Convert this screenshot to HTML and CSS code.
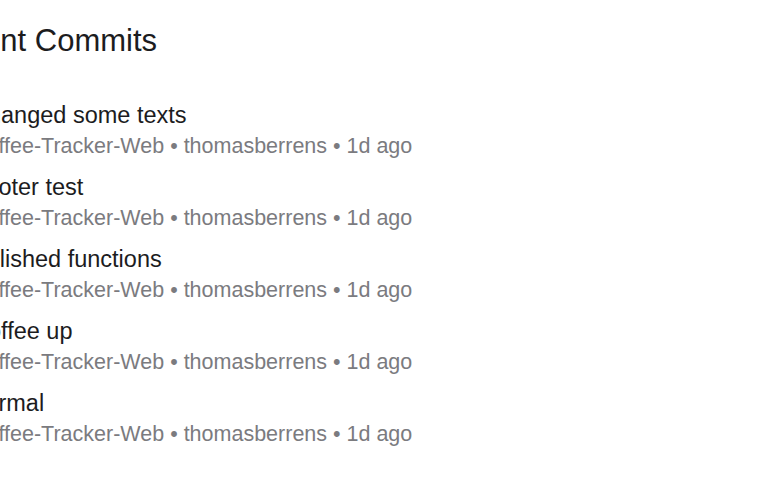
FILE: index.html
```html
<!DOCTYPE html>
<html lang="en">
<head>
<meta charset="UTF-8">
<meta name="viewport" content="width=device-width, initial-scale=1.0">
<link rel="stylesheet" href="styles.css">
</head>
<body>
<div class="container">
	<h2 class="header">Recent Commits</h2>
	<ul class="commit-list">
		<li class="commit">
			<span class="commit-title">Changed some texts</span>
			<span class="commit-meta">Coffee-Tracker-Web • thomasberrens • 1d ago</span>
		</li>
		<li class="commit">
			<span class="commit-title">Footer test</span>
			<span class="commit-meta">Coffee-Tracker-Web • thomasberrens • 1d ago</span>
		</li>
		<li class="commit">
			<span class="commit-title">Polished functions</span>
			<span class="commit-meta">Coffee-Tracker-Web • thomasberrens • 1d ago</span>
		</li>
		<li class="commit">
			<span class="commit-title">Coffee up</span>
			<span class="commit-meta">Coffee-Tracker-Web • thomasberrens • 1d ago</span>
		</li>
		<li class="commit">
			<span class="commit-title">Formal</span>
			<span class="commit-meta">Coffee-Tracker-Web • thomasberrens • 1d ago</span>
		</li>
	</ul>
</div>
</body>
</html>
```

FILE: styles.css
```css
body {
	font-family: "Liberation Sans", Arial, sans-serif;
	background-color: #fff;
	margin: 0;
	padding: 0;
	overflow: hidden;
}

.container {
	display: flex;
	flex-direction: column;
	margin-left: -29px;
	padding-top: 23px;
}

.header {
	margin: 0 0 41px -43px;
	font-size: 31px;
	line-height: 36px;
	font-weight: normal;
	color: #1c1c1e;
	white-space: nowrap;
}

.commit-list {
	list-style: none;
	margin: 0;
	padding: 0;
	display: flex;
	flex-direction: column;
	gap: 10px;
}

.commit {
	display: flex;
	flex-direction: column;
	white-space: nowrap;
}

.commit-title {
	font-size: 23.5px;
	line-height: 31px;
	color: #1c1c1e;
}

.commit-meta {
	font-size: 21.5px;
	line-height: 31px;
	color: #7b7b7f;
}
```
